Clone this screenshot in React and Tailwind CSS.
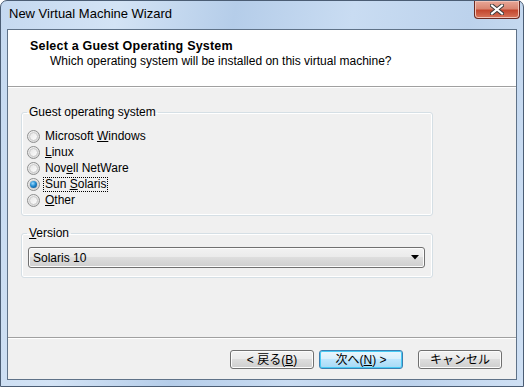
import React from "react";

const ui = { fontFamily: '"Liberation Sans", "Noto Sans CJK JP", sans-serif' };

function Radio({ checked }) {
  return (
    <span className="relative flex h-[13px] w-[13px] shrink-0 items-center justify-center rounded-full border border-[#8e8f8f] bg-[radial-gradient(circle_at_40%_35%,#ffffff_0%,#eaeaea_45%,#cfcfcf_100%)]">
      <span className="flex h-[9px] w-[9px] items-center justify-center rounded-full border border-[#c9c9c9] bg-[linear-gradient(135deg,#e6e6e6,#fdfdfd)]">
        {checked && (
          <span className="h-[7px] w-[7px] rounded-full bg-[radial-gradient(circle_at_40%_35%,#9fdcff_0%,#1f8ad0_45%,#0b3f78_100%)]" />
        )}
      </span>
    </span>
  );
}

function RadioRow({ pre, u, post, checked, focus }) {
  return (
    <div className="flex h-[16px] items-center gap-[3px]">
      <Radio checked={checked} />
      <span
        className={
          focus
            ? "border border-dotted border-[#000] px-[1px] leading-[13px]"
            : "border border-transparent px-[1px] leading-[13px]"
        }
      >
        {pre}
        <span className="underline">{u}</span>
        {post}
      </span>
    </div>
  );
}

function Btn({ children, def }) {
  return (
    <div
      className={
        def
          ? "flex h-[19px] w-[84px] items-center justify-center rounded-[3px] border border-[#3c7fb1] bg-[linear-gradient(#eaf6fd_0%,#d9f0fc_45%,#bee6fd_50%,#a7d9f5_100%)] shadow-[inset_0_0_0_1px_#48cbf5]"
          : "flex h-[19px] w-[84px] items-center justify-center rounded-[3px] border border-[#707070] bg-[linear-gradient(#f2f2f2_0%,#ebebeb_45%,#dddddd_50%,#cfcfcf_100%)] shadow-[inset_0_0_0_1px_#fcfcfc]"
      }
    >
      <span className="text-[12px] leading-[12px] text-black">{children}</span>
    </div>
  );
}

export default function App() {
  return (
    <div className="h-[387px] w-[524px] overflow-hidden bg-white" style={ui}>
      <div className="flex h-[387px] w-[524px] flex-col rounded-t-[7px] border border-[#4b5d74] bg-[linear-gradient(100deg,#c5d9f0_0%,#d3e3f5_20%,#b5cde9_40%,#c9dcf2_60%,#bcd2ec_80%,#cfe0f4_100%)]">
        {/* title bar */}
        <div className="flex h-[28px] shrink-0 items-start justify-between">
          <span className="pl-[8px] pt-[5px] text-[13px] leading-[15px] text-black">
            New Virtual Machine Wizard
          </span>
          <div className="mr-[3px] flex h-[18px] w-[46px] items-center justify-center rounded-b-[4px] border border-t-0 border-[#6b2a22] bg-[linear-gradient(#e8a797_0%,#d98672_45%,#c3472f_55%,#d7755b_100%)] shadow-[inset_0_0_0_1px_#f1c2b6]">
            <svg width="14" height="11" viewBox="0 0 14 11">
              <path d="M2 1.5 L12 9.5 M12 1.5 L2 9.5" stroke="#3b3b3b" strokeWidth="4" strokeLinecap="square" />
              <path d="M2 1.5 L12 9.5 M12 1.5 L2 9.5" stroke="#ffffff" strokeWidth="2" strokeLinecap="square" />
            </svg>
          </div>
        </div>
        {/* client area */}
        <div className="mx-[6px] flex h-[351px] flex-col border border-[#5f7288] bg-[#f0f0f0] text-[12px] text-black">
          {/* header */}
          <div className="flex h-[56px] shrink-0 flex-col bg-white pl-[22px] pt-[9px]">
            <span className="text-[12.5px] font-bold leading-[14px] tracking-[0.2px]">Select a Guest Operating System</span>
            <span className="pl-[20px] pt-[1px] text-[12px] leading-[14px]">
              Which operating system will be installed on this virtual machine?
            </span>
          </div>
          <div className="h-[1px] shrink-0 bg-[#a0a0a0]" />
          <div className="h-[1px] shrink-0 bg-white" />
          {/* content */}
          <div className="flex flex-1 flex-col pl-[13px] pt-[18px]">
            <fieldset className="h-[110px] w-[412px] rounded-[3px] border border-[#d5dfe5] pl-[5px] pt-[10px] shadow-[inset_0_0_0_1px_#ffffff]">
              <legend className="ml-0 px-[2px] text-[12px] leading-[12px]">Guest operating system</legend>
              <RadioRow pre="Microsoft " u="W" post="indows" />
              <RadioRow u="L" post="inux" />
              <RadioRow pre="Nov" u="e" post="ll NetWare" />
              <RadioRow pre="Sun " u="S" post="olaris" checked focus />
              <RadioRow u="O" post="ther" />
            </fieldset>
            <fieldset className="mt-[11px] h-[51px] w-[412px] rounded-[3px] border border-[#d5dfe5] pl-[6px] pt-[8px] shadow-[inset_0_0_0_1px_#ffffff]">
              <legend className="ml-[-1px] px-[2px] text-[12px] leading-[12px]">
                <span className="underline">V</span>ersion
              </legend>
              <div className="flex h-[21px] w-[397px] items-center justify-between rounded-[3px] border border-[#707070] bg-[linear-gradient(#f2f2f2_0%,#ebebeb_45%,#dddddd_50%,#cfcfcf_100%)] pl-[4px] pr-[5px] shadow-[inset_0_0_0_1px_#fcfcfc]">
                <span className="leading-[14px]">Solaris 10</span>
                <svg width="8" height="5" viewBox="0 0 8 5">
                  <path d="M0 0 H8 L4 4.5 Z" fill="#000" />
                </svg>
              </div>
            </fieldset>
          </div>
          {/* bottom */}
          <div className="h-[1px] shrink-0 bg-[#a0a0a0]" />
          <div className="h-[1px] shrink-0 bg-white" />
          <div className="flex h-[40px] shrink-0 items-start justify-end gap-[5px] pr-[14px] pt-[11px]">
            <Btn>
              &lt; 戻る(<span className="underline">B</span>)
            </Btn>
            <Btn def>
              次へ(<span className="underline">N</span>) &gt;
            </Btn>
            <div className="w-[5px]" />
            <Btn>キャンセル</Btn>
          </div>
        </div>
      </div>
    </div>
  );
}
